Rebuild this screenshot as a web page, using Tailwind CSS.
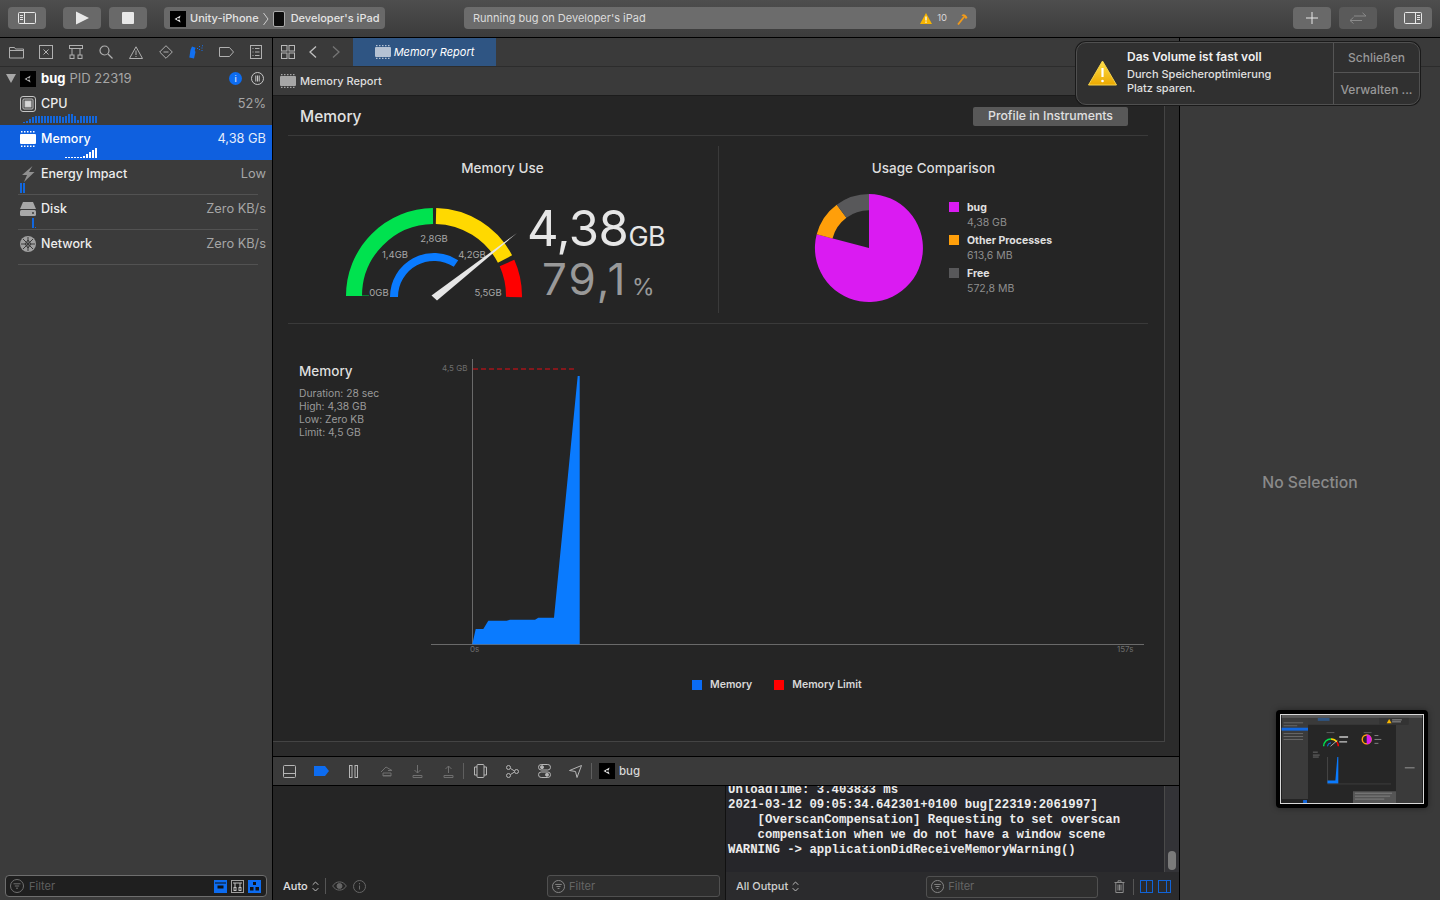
<!DOCTYPE html>
<html lang="en">
<head>
  <meta charset="UTF-8" />
  <title>Xcode - Memory Report</title>
  <script src="https://cdn.jsdelivr.net/npm/@tailwindcss/browser@4"></script>
</head>
<body class="bg-[#3a3a3a] font-[Inter,sans-serif] antialiased">
<div class="relative w-[1440px] h-[900px] overflow-hidden flex flex-col text-[#e6e6e6]">

  <!-- Toolbar -->
  <header class="h-[38px] shrink-0 flex items-center px-2 pb-[1px] border-b border-black bg-gradient-to-b from-[#4e4e4e] to-[#3b3b3b]">
    <button class="w-[38px] h-[22px] rounded-[4px] bg-[#696969] flex items-center justify-center">
      <svg width="18" height="14" viewBox="0 0 18 14" fill="none" stroke="#e8e8e8"><rect x="0.5" y="1.5" width="17" height="11" rx="1"/><path d="M6.5 1.5v11M2 4.5h3M2 6.5h3M2 8.5h3"/></svg>
    </button>
    <button class="ml-[17px] w-[38px] h-[22px] rounded-[4px] bg-[#696969] flex items-center justify-center">
      <svg width="14" height="14" viewBox="0 0 14 14" fill="#e8e8e8"><path d="M1 0.5L14 7L1 13.5Z"/></svg>
    </button>
    <button class="ml-[8px] w-[38px] h-[22px] rounded-[4px] bg-[#696969] flex items-center justify-center">
      <span class="w-3 h-3 rounded-[1px] bg-[#e8e8e8]"></span>
    </button>
    <div class="ml-[17px] w-[221px] h-[22px] rounded-[4px] bg-[#696969] flex items-center pl-[6px] pt-[1px] text-[11px] text-[#e4e4e4] font-medium">
      <svg width="16" height="16" viewBox="0 0 16 16"><rect width="16" height="16" fill="#000"/><path d="M4.500 8L8 6l2.500-1.500-.5 2L9 8l1 1.500.5 2L8 10z" fill="#ddd"/><circle cx="8" cy="8" r="1" fill="#000"/></svg>
      <span class="ml-[4px]">Unity-iPhone</span>
      <svg class="ml-[4px]" width="6" height="14" viewBox="0 0 6 14" fill="none" stroke="#ccc"><path d="M0.500 1l4.500 6-4.500 6"/></svg>
      <svg class="ml-[4px]" width="12" height="16" viewBox="0 0 12 16"><rect x="0.500" y="0.500" width="11" height="15" rx="1.500" fill="#0c0c0c" stroke="#aaa"/></svg>
      <span class="ml-[6px]">Developer's iPad</span>
    </div>
    <div class="ml-[79px] w-[512px] h-[22px] rounded-[4px] bg-[#6c6c6c] flex items-center pl-[9px] pr-[8px] pt-[1px] text-[11px] text-[#dcdcdc]">
      <span>Running bug on Developer's iPad</span>
      <svg class="ml-auto" width="12" height="11" viewBox="0 0 12 11"><path d="M6 0L12 11H0Z" fill="#f7b500"/><path d="M6 3.500v4M6 8.500v1.200" stroke="#fff" stroke-width="1.300"/></svg>
      <span class="ml-[5px] text-[9.500px] text-[#d8d8d8]">10</span>
      <svg class="ml-[10px]" width="11" height="12" viewBox="0 0 11 12" fill="none"><path d="M1 11.500L7 4" stroke="#f09a1a" stroke-width="1.800"/><path d="M4.500 2.500C6 .8 8 .5 10.500 4.500L9 6 6.500 3.500Z" fill="#f09a1a"/></svg>
    </div>
    <button class="ml-[317px] w-[38px] h-[22px] rounded-[4px] bg-[#696969] flex items-center justify-center">
      <svg width="12" height="12" viewBox="0 0 12 12" stroke="#e8e8e8"><path d="M6 0v12M0 6h12"/></svg>
    </button>
    <button class="ml-[8px] w-[38px] h-[22px] rounded-[4px] bg-[#5a5a5a] flex items-center justify-center">
      <svg width="18" height="12" viewBox="0 0 18 12" fill="none" stroke="#8a8a8a"><path d="M5 4h12M13.500 .8L17 4M1 8.500h12M4.500 5.300L1 8.500l3.500 3"/></svg>
    </button>
    <button class="ml-[17px] w-[38px] h-[22px] rounded-[4px] bg-[#696969] flex items-center justify-center">
      <svg width="18" height="14" viewBox="0 0 18 14" fill="none" stroke="#e8e8e8"><rect x="0.500" y="1.500" width="17" height="11" rx="1"/><path d="M11.500 1.500v11M13 4.500h3M13 6.500h3M13 8.500h3"/></svg>
    </button>
  </header>

  <div class="flex flex-1 min-h-0">

    <!-- Debug navigator -->
    <aside class="w-[273px] shrink-0 border-r border-black bg-[#3b3b3b] flex flex-col">
      <div class="h-[29px] shrink-0 border-b border-[#2c2c2c] flex items-center pl-[1px]">
        <span class="w-[30px] flex justify-center"><svg width="15" height="13" viewBox="0 0 15 13" fill="none" stroke="#b0b0b0"><path d="M.5 3V1.500h5l1 1.500h8v9H.5zM.5 4.500h14"/></svg></span>
        <span class="w-[30px] flex justify-center"><svg width="14" height="14" viewBox="0 0 14 14" fill="none" stroke="#b0b0b0"><rect x=".5" y=".5" width="13" height="13"/><path d="M4.500 4.500l5 5M9.500 4.500l-5 5"/></svg></span>
        <span class="w-[30px] flex justify-center"><svg width="14" height="14" viewBox="0 0 14 14" fill="none" stroke="#b0b0b0"><rect x=".5" y=".5" width="13" height="3"/><rect x="1" y="10" width="4" height="3.500"/><rect x="9" y="10" width="4" height="3.500"/><path d="M3 3.500V10M11 3.500V10"/></svg></span>
        <span class="w-[30px] flex justify-center"><svg width="14" height="14" viewBox="0 0 14 14" fill="none" stroke="#b0b0b0" stroke-width="1.200"><circle cx="5.500" cy="5.500" r="4.500"/><path d="M9 9l4.500 4.500"/></svg></span>
        <span class="w-[30px] flex justify-center"><svg width="14" height="13" viewBox="0 0 14 13" fill="none" stroke="#b0b0b0"><path d="M7 .8L13.500 12.500H.5zM7 4.500v4.500M7 10v1"/></svg></span>
        <span class="w-[30px] flex justify-center"><svg width="14" height="14" viewBox="0 0 14 14" fill="none" stroke="#b0b0b0"><path d="M7 .7L13.300 7 7 13.300 .7 7zM4.500 7h5"/></svg></span>
        <span class="w-[30px] flex justify-center"><svg width="15" height="14" viewBox="0 0 15 14" fill="#1270f0"><path d="M1.500 5L3 1.500l3.500 1.200-.7 2.800L6.500 7 5 13.500.3 12.500z"/><path d="M8 3h1v1H8zM10 1h1v1h-1zM10 4h1v1h-1zM12.500 2.500h1v1h-1zM13 .2h1v1h-1zM12.500 5h1v1h-1z"/></svg></span>
        <span class="w-[30px] flex justify-center"><svg width="15" height="10" viewBox="0 0 15 10" fill="none" stroke="#b0b0b0"><path d="M.5.5h10l4 4.500-4 4.500H.5z"/></svg></span>
        <span class="w-[30px] flex justify-center"><svg width="12" height="14" viewBox="0 0 12 14" fill="none" stroke="#b0b0b0"><rect x=".5" y=".5" width="11" height="13"/><path d="M2.500 3.500h1M5 3.500h4.500M2.500 7h1M5 7h4.500M2.500 10.500h1M5 10.500h4.500"/></svg></span>
      </div>

      <div class="h-[23px] shrink-0 flex items-center pl-[6px] pr-[8px]">
        <svg width="10" height="9" viewBox="0 0 10 9" fill="#a8a8a8"><path d="M0 0h10L5 9z"/></svg>
        <svg class="ml-[4px]" width="16" height="16" viewBox="0 0 16 16"><rect width="16" height="16" fill="#000"/><path d="M4.500 8L8 6l2.500-1.500-.5 2L9 8l1 1.500.5 2L8 10z" fill="#aaa"/><circle cx="8" cy="8" r="1" fill="#000"/></svg>
        <span class="ml-[5px] text-[13px] font-bold text-white">bug</span>
        <span class="ml-[4px] text-[13px] text-[#a6a6a6]">PID 22319</span>
        <span class="ml-auto w-[13px] h-[13px] rounded-full bg-[#0d6cf0] flex items-center justify-center text-[8px] font-bold text-[#bcd6ff]">i</span>
        <svg class="ml-[9px]" width="13" height="13" viewBox="0 0 13 13" fill="none" stroke="#c8c8c8"><circle cx="6.500" cy="6.500" r="6"/><path d="M4.800 3.500v6M6.500 3.500v6M8.200 3.500v6"/></svg>
      </div>

      <!-- CPU -->
      <div class="relative h-[35px] shrink-0">
        <div class="flex items-center pl-[20px] pr-[6px] h-[27px] pt-[1px]">
          <svg width="16" height="16" viewBox="0 0 16 16" fill="none" stroke="#c6c6c6"><rect x=".5" y=".5" width="15" height="15" rx="2.500"/><rect x="3" y="3" width="10" height="10" rx="1"/><rect x="5" y="5" width="6" height="6" fill="#d6d6d6"/></svg>
          <span class="ml-[5px] text-[12.500px] font-medium text-[#ededed]">CPU</span>
          <span class="ml-auto text-[12.800px] text-[#a6a6a6]">52%</span>
        </div>
        <svg class="absolute left-0 top-[23px]" width="100" height="11" viewBox="0 0 100 11" fill="none" stroke="#1267de" stroke-width="2"><path d="M24 10V9M27 10V8M30 10V6M33 10V4M36 10V3M39 10V3M42 10V3M45 10V3M48 10V3M51 10V3M54 10V3M57 10V3M60 10V3M63 10V4M66 10V3M69 10V1M72 10V1M75 10V3M78 10V7M81 10V3M84 10V3M87 10V3M90 10V3M93 10V3M96 10V3"/></svg>
      </div>

      <!-- Memory -->
      <div class="relative h-[35px] shrink-0 bg-[#0f60df]">
        <div class="flex items-center pl-[20px] pr-[6px] h-[28px]">
          <svg width="16" height="16" viewBox="0 0 16 16" fill="#fff"><rect x="0" y="3" width="16" height="10" rx="1"/><path d="M1 0h1.500v1.500H1zM4 0h1.500v1.500H4zM7 0h1.500v1.500H7zM10 0h1.500v1.500H10zM13 0h1.500v1.500H13zM1 14.500h1.500V16H1zM4 14.500h1.500V16H4zM7 14.500h1.500V16H7zM10 14.500h1.500V16H10zM13 14.500h1.500V16H13z"/></svg>
          <span class="ml-[5px] text-[12.500px] font-medium text-white">Memory</span>
          <span class="ml-auto text-[12.800px] text-[#e3ecfb]">4,38 GB</span>
        </div>
        <svg class="absolute left-0 top-[22px]" width="100" height="12" viewBox="0 0 100 12" fill="none" stroke="#fff" stroke-width="2"><path d="M66 11v-1M69 11v-1M72 11v-1M75 11v-1M78 11v-1M81 11v-1M84 11V9M87 11V7M90 11V5M93 11V3M96 11V1"/></svg>
      </div>

      <!-- Energy -->
      <div class="relative h-[35px] shrink-0">
        <div class="flex items-center pl-[20px] pr-[6px] h-[28px]">
          <svg width="16" height="16" viewBox="0 0 16 16" fill="#8f8f8f"><path d="M12.500 0L2 9h5l-3 7 10.500-10H9z"/></svg>
          <span class="ml-[5px] text-[12.500px] font-medium text-[#ededed]">Energy Impact</span>
          <span class="ml-auto text-[12.800px] text-[#a6a6a6]">Low</span>
        </div>
        <div class="absolute left-[20px] top-[23px] flex gap-[1px]"><span class="w-[2px] h-[10px] bg-[#1267de]"></span><span class="w-[2px] h-[10px] bg-[#1267de]"></span></div>
        <div class="absolute left-[18px] right-[14px] bottom-0 h-[1px] bg-[#525252]"></div>
      </div>

      <!-- Disk -->
      <div class="relative h-[35px] shrink-0">
        <div class="flex items-center pl-[20px] pr-[6px] h-[28px]">
          <svg width="16" height="14" viewBox="0 0 16 14" fill="#a8a8a8"><path d="M3 0h10l3 7H0z"/><rect y="8" width="16" height="6" rx="1.500"/><circle cx="13" cy="11" r="1" fill="#3b3b3b"/></svg>
          <span class="ml-[5px] text-[12.500px] font-medium text-[#ededed]">Disk</span>
          <span class="ml-auto text-[12.800px] text-[#a6a6a6]">Zero KB/s</span>
        </div>
        <div class="absolute left-[32px] top-[23px] flex items-end gap-[1px]"><span class="w-[2px] h-[10px] bg-[#1267de]"></span><span class="w-[1px] h-[1px] bg-[#1267de]"></span></div>
        <div class="absolute left-[18px] right-[14px] bottom-0 h-[1px] bg-[#525252]"></div>
      </div>

      <!-- Network -->
      <div class="relative h-[35px] shrink-0">
        <div class="flex items-center pl-[20px] pr-[6px] h-[28px]">
          <svg width="16" height="16" viewBox="0 0 16 16"><circle cx="8" cy="8" r="8" fill="#a0a0a0"/><path d="M8 1v14M1 8h14M3 3l10 10M13 3L3 13M8 4l-3 4 3 4 3-4z" stroke="#3b3b3b" fill="none"/></svg>
          <span class="ml-[5px] text-[12.500px] font-medium text-[#ededed]">Network</span>
          <span class="ml-auto text-[12.800px] text-[#a6a6a6]">Zero KB/s</span>
        </div>
        <div class="absolute left-[18px] right-[14px] bottom-0 h-[1px] bg-[#525252]"></div>
      </div>

      <!-- Filter -->
      <div class="mt-auto mb-[3px] mx-[5px] h-[22px] rounded-[4px] border border-[#6e6e6e] bg-[#1f1f1f] flex items-center pl-[4px] pr-[5px]">
        <svg width="14" height="14" viewBox="0 0 14 14" fill="none" stroke="#707070"><circle cx="7" cy="7" r="6.500"/><path d="M3.500 4.800h7M4.800 7h4.400M6 9.200h2"/></svg>
        <span class="ml-[5px] text-[11px] text-[#5f5f5f]">Filter</span>
        <span class="ml-auto w-[13px] h-[13px] bg-[#0d6cf0] flex items-center justify-center"><svg width="11" height="9" viewBox="0 0 11 9" fill="#111"><path d="M0 1h11" stroke="#111"/><rect x="2.500" y="3.500" width="6" height="3"/></svg></span>
        <span class="ml-[4px] w-[13px] h-[13px] border border-[#a0a0a0] flex items-center justify-center"><svg width="9" height="9" viewBox="0 0 9 9" fill="none" stroke="#c0c0c0"><path d="M0 1h9M2 1v4M7 1v4"/><rect x="1" y="5.500" width="2" height="3"/><rect x="6" y="5.500" width="2" height="3"/></svg></span>
        <span class="ml-[4px] w-[13px] h-[13px] bg-[#0d6cf0] flex items-center justify-center"><svg width="9" height="9" viewBox="0 0 9 9" fill="#111"><rect x="3" y="0" width="3" height="3"/><rect x="0" y="5" width="3.500" height="3.500"/><rect x="5.500" y="5" width="3.500" height="3.500"/></svg></span>
      </div>
    </aside>

    <!-- Editor + debug area -->
    <main class="w-[907px] shrink-0 border-r border-black flex flex-col">
      <!-- Tab bar -->
      <div class="h-[29px] shrink-0 border-b border-[#2c2c2c] bg-[#3a3a3a] flex items-stretch">
        <span class="ml-[8px] w-[14px] flex items-center"><svg width="14" height="14" viewBox="0 0 14 14" fill="none" stroke="#b8b8b8"><rect x=".5" y=".5" width="5.500" height="5.500"/><rect x="8" y=".5" width="5.500" height="5.500"/><rect x=".5" y="8" width="5.500" height="5.500"/><rect x="8" y="8" width="5.500" height="5.500"/></svg></span>
        <span class="ml-[14px] w-[8px] flex items-center"><svg width="8" height="12" viewBox="0 0 8 12" fill="none" stroke="#c0c0c0" stroke-width="1.300"><path d="M7 .5L1 6l6 5.500"/></svg></span>
        <span class="ml-[15px] w-[8px] flex items-center"><svg width="8" height="12" viewBox="0 0 8 12" fill="none" stroke="#757575" stroke-width="1.300"><path d="M1 .5L7 6l-6 5.500"/></svg></span>
        <div class="ml-[13px] w-[143px] bg-[#2f5583] flex items-center justify-center">
          <svg width="16" height="14" viewBox="0 0 16 14" fill="#b5c2d3"><rect y="2" width="16" height="10" rx="1"/><path d="M1 0h1.500v1.200H1zM4 0h1.500v1.200H4zM7 0h1.500v1.200H7zM10 0h1.500v1.200H10zM13 0h1.500v1.200H13zM1 12.800h1.500V14H1zM4 12.800h1.500V14H4zM7 12.800h1.500V14H7zM10 12.800h1.500V14H10zM13 12.800h1.500V14H13z"/></svg>
          <span class="ml-[3px] text-[11px] italic text-white">Memory Report</span>
        </div>
      </div>

      <!-- Breadcrumb -->
      <div class="h-[29px] shrink-0 border-b border-[#1c1c1c] bg-[#3a3a3a] flex items-center pl-[7px]">
        <svg width="16" height="14" viewBox="0 0 16 14" fill="#a6a6a6"><rect y="2" width="16" height="10" rx="1"/><path d="M1 0h1.500v1.200H1zM4 0h1.500v1.200H4zM7 0h1.500v1.200H7zM10 0h1.500v1.200H10zM13 0h1.500v1.200H13zM1 12.800h1.500V14H1zM4 12.800h1.500V14H4zM7 12.800h1.500V14H7zM10 12.800h1.500V14H10zM13 12.800h1.500V14H13z"/></svg>
        <span class="ml-[4px] text-[11px] font-medium text-[#dedede]">Memory Report</span>
      </div>

      <div class="h-[646px] shrink-0 flex items-start bg-[#2b2b2b]">
        <!-- Report -->
        <section class="w-[892px] h-[646px] shrink-0 bg-[#252525] border-r border-b border-[#444] pl-[15px] pr-[16px] flex flex-col">
          <div class="h-[40px] shrink-0 border-b border-[#3a3a3a] flex items-center justify-between pl-[12px] pr-[20px] pt-[2px]">
            <h1 class="text-[15.500px] font-medium text-[#e2e2e2]">Memory</h1>
            <button class="w-[155px] h-[19px] rounded-[2px] bg-[#585858] text-[12.300px] font-medium text-[#e0e0e0] flex items-center justify-center">Profile in Instruments</button>
          </div>

          <div class="h-[188px] shrink-0 border-b border-[#3a3a3a] py-[10px] flex">
            <!-- Memory use gauge -->
            <div class="w-[431px] shrink-0 border-r border-[#3a3a3a] flex flex-col items-center pt-[12px] pr-[1px]">
              <h2 class="h-[20px] text-[13.500px] leading-[20px] font-medium text-[#dedede]">Memory Use</h2>
              <svg class="mt-[12px]" width="330" height="120" viewBox="338 190 330 120" fill="none">
                <path d="M354 296 A80 80 0 0 1 433 216" stroke="#00e24f" stroke-width="16"/>
                <path d="M436 216 A80 80 0 0 1 505 259" stroke="#ffd900" stroke-width="16"/>
                <path d="M507 263 A80 80 0 0 1 514 297" stroke="#ff0000" stroke-width="16"/>
                <path d="M362 295.500h7" stroke="#0b7a33"/>
                <path d="M394 297 A40 40 0 0 1 456 263.500" stroke="#0a7bff" stroke-width="8"/>
                <g font-size="9.500" fill="#a8a8a8" text-anchor="middle">
                  <text x="434" y="242">2,8GB</text>
                  <text x="395" y="258">1,4GB</text>
                  <text x="472" y="258">4,2GB</text>
                  <text x="379" y="296">0GB</text>
                  <text x="488" y="296">5,5GB</text>
                </g>
                <path d="M517 233 L431.500 295.500 L437 300.500 Z" fill="#e6e6e6"/>
                <text x="527" y="246" font-size="49" fill="#e6e6e6" letter-spacing="-.5">4,38<tspan font-size="27">GB</tspan></text>
                <text x="542" y="295" font-size="44" fill="#999999" letter-spacing="2">79,1</text>
                <text x="632" y="295" font-size="23" fill="#999999">%</text>
              </svg>
            </div>
            <!-- Usage comparison -->
            <div class="flex-1 flex flex-col pt-[12px]">
              <h2 class="h-[20px] text-center text-[13.500px] leading-[20px] font-medium text-[#dedede]">Usage Comparison</h2>
              <div class="mt-[12px] flex pl-[91px]">
                <svg width="120" height="120" viewBox="810 190 120 120">
                  <path d="M869 248 V194 A54 54 0 1 1 816.700 234.300 Z" fill="#da1bf2"/>
                  <path d="M816.700 234.300 A54 54 0 0 1 836.700 204.700 L846.400 217.800 A37.700 37.700 0 0 0 832.500 238.400 Z" fill="#ff9f0a"/>
                  <path d="M836.700 204.700 A54 54 0 0 1 869 194 V210.300 A37.700 37.700 0 0 0 846.400 217.800 Z" fill="#58585a"/>
                </svg>
                <div class="ml-[19px] mt-[10px] text-[10.500px] leading-[15px]">
                  <div class="h-[33px] relative pl-[18px]"><span class="absolute left-0 top-[2px] w-[10px] h-[10px] bg-[#da1bf2]"></span><p class="font-bold text-[#e0e0e0]">bug</p><p class="text-[#8e8e8e]">4,38 GB</p></div>
                  <div class="h-[33px] relative pl-[18px]"><span class="absolute left-0 top-[2px] w-[10px] h-[10px] bg-[#ff9f0a]"></span><p class="font-bold text-[#e0e0e0]">Other Processes</p><p class="text-[#8e8e8e]">613,6 MB</p></div>
                  <div class="h-[33px] relative pl-[18px]"><span class="absolute left-0 top-[2px] w-[10px] h-[10px] bg-[#58585a]"></span><p class="font-bold text-[#e0e0e0]">Free</p><p class="text-[#8e8e8e]">572,8 MB</p></div>
                </div>
              </div>
            </div>
          </div>

          <!-- Timeline -->
          <div class="flex-1 flex">
            <div class="w-[142px] shrink-0 pl-[11px] pt-[37px]">
              <h3 class="h-[20px] text-[13.500px] leading-[20px] font-medium text-[#dedede]">Memory</h3>
              <div class="mt-[6px] text-[10.300px] leading-[13px] text-[#9a9a9a]">
                <p>Duration: 28 sec</p>
                <p>High: 4,38 GB</p>
                <p>Low: Zero KB</p>
                <p>Limit: 4,5 GB</p>
              </div>
            </div>
            <div class="flex-1 flex flex-col">
              <svg class="mt-[31px]" width="718" height="305" viewBox="430 355 718 305" fill="none">
                <path d="M472.500 359V644" stroke="#6a6a6a"/>
                <path d="M431 644.500H1144" stroke="#6a6a6a"/>
                <path d="M473 369H575" stroke="#a3141a" stroke-dasharray="5 3" stroke-width="1.300"/>
                <path d="M472.300 644.300L475.700 629H483.300L488.300 620.700H506.700L510 619.700H535L538.300 617.700H554L577.700 376H579.700V644.300Z" fill="#0a7bff"/>
                <g font-size="8" fill="#6e6e6e">
                  <text x="442" y="371">4,5 GB</text>
                  <text x="470" y="652">0s</text>
                  <text x="1117" y="652">157s</text>
                </g>
              </svg>
              <div class="mt-[17px] ml-[262px] flex items-center text-[10.500px] font-semibold text-[#d8d8d8]">
                <span class="w-[10px] h-[10px] bg-[#0a6cf5]"></span><span class="ml-[8px]">Memory</span>
                <span class="ml-[22px] w-[10px] h-[10px] bg-[#f00]"></span><span class="ml-[8px]">Memory Limit</span>
              </div>
            </div>
          </div>
        </section>
      </div>

      <div class="h-[15px] shrink-0 bg-[#2b2b2b] border-b border-black"></div>

      <!-- Debug bar -->
      <div class="h-[29px] shrink-0 border-b border-black bg-[#3a3a3a] flex items-center pl-[10px] text-[#d6d6d6]">
        <svg width="13" height="13" viewBox="0 0 13 13" fill="none" stroke="#b6b6b6"><rect x=".5" y=".5" width="12" height="12" rx="1"/><path d="M.5 8.500h12"/></svg>
        <svg class="ml-[18px]" width="15" height="10" viewBox="0 0 15 10" fill="#0d6cf0"><path d="M0 0h11l4 5-4 5H0z"/></svg>
        <svg class="ml-[20px]" width="9" height="13" viewBox="0 0 9 13" fill="none" stroke="#b6b6b6"><rect x=".5" y=".5" width="2.500" height="12"/><rect x="6" y=".5" width="2.500" height="12"/></svg>
        <svg class="ml-[22px]" width="13" height="12" viewBox="0 0 13 12" fill="none" stroke="#6f6f6f"><path d="M1 7l5-5 6 3.500H8M3 10.500h8M3 8h8v3H3z"/></svg>
        <svg class="ml-[19px]" width="11" height="13" viewBox="0 0 11 13" fill="none" stroke="#6f6f6f"><path d="M5.500 0v8M2.500 5l3 3 3-3M1 10.500h9v2H1z"/></svg>
        <svg class="ml-[20px]" width="11" height="13" viewBox="0 0 11 13" fill="none" stroke="#6f6f6f"><path d="M5.500 8V1M2.500 4l3-3 3 3M1 10.500h9v2H1z"/></svg>
        <span class="ml-[9px] w-[1px] h-[16px] bg-[#5f5f5f]"></span>
        <svg class="ml-[10px]" width="13" height="14" viewBox="0 0 13 14" fill="none" stroke="#b6b6b6"><rect x="3" y=".5" width="7" height="13" rx="1"/><path d="M3 3H.5v8H3M10 3h2.500v8H10"/></svg>
        <svg class="ml-[19px]" width="13" height="13" viewBox="0 0 13 13" fill="none" stroke="#b6b6b6"><circle cx="2.500" cy="2.500" r="2"/><circle cx="2.500" cy="10.500" r="2"/><circle cx="10.500" cy="6.500" r="2"/><path d="M4.500 3.500l4 2.500M4.500 9.500l4-2.500"/></svg>
        <svg class="ml-[19px]" width="13" height="14" viewBox="0 0 13 14" fill="none" stroke="#b6b6b6"><rect x=".5" y=".5" width="12" height="5.500" rx="2.700"/><rect x=".5" y="8" width="12" height="5.500" rx="2.700"/><circle cx="4" cy="3.200" r="1.500" fill="#b6b6b6"/><circle cx="9" cy="10.700" r="1.500" fill="#b6b6b6"/></svg>
        <svg class="ml-[18px]" width="13" height="13" viewBox="0 0 13 13" fill="none" stroke="#b6b6b6"><path d="M12.500.5L.5 5.500l6 1 1.500 6z"/></svg>
        <span class="ml-[9px] w-[1px] h-[16px] bg-[#5f5f5f]"></span>
        <svg class="ml-[7px]" width="16" height="16" viewBox="0 0 16 16"><rect width="16" height="16" fill="#000"/><path d="M4.500 8L8 6l2.500-1.500-.5 2L9 8l1 1.500.5 2L8 10z" fill="#ddd"/><circle cx="8" cy="8" r="1" fill="#000"/></svg>
        <span class="ml-[4px] pt-[2px] text-[11.500px] font-medium">bug</span>
      </div>

      <!-- Console -->
      <div class="flex-1 min-h-0 flex">
        <div class="w-[453px] shrink-0 bg-[#252525] border-r border-[#111] flex flex-col justify-end pb-[3px] pl-[10px] pr-[5px]">
          <div class="h-[22px] flex items-center">
            <span class="text-[11px] font-medium text-[#e0e0e0]">Auto</span>
            <svg class="ml-[4px]" width="7" height="11" viewBox="0 0 7 11" fill="none" stroke="#bcbcbc"><path d="M.7 3.800L3.500 1l2.800 2.800M.7 7.200L3.500 10l2.800-2.800"/></svg>
            <span class="ml-[6px] w-[1px] h-[16px] bg-[#555]"></span>
            <svg class="ml-[6px]" width="15" height="10" viewBox="0 0 15 10" fill="none" stroke="#666"><path d="M.7 5C4 -.5 11 -.5 14.300 5 11 10.500 4 10.500 .7 5z"/><circle cx="7.500" cy="5" r="2.500" fill="#666"/></svg>
            <svg class="ml-[6px]" width="13" height="13" viewBox="0 0 13 13" fill="none" stroke="#666"><circle cx="6.500" cy="6.500" r="6"/><path d="M6.500 5.500v4M6.500 3v1.300"/></svg>
            <div class="ml-auto w-[173px] h-[22px] rounded-[3px] border border-[#505050] bg-[#2e2e2e] flex items-center pl-[4px]">
              <svg width="13" height="13" viewBox="0 0 14 14" fill="none" stroke="#8a8a8a"><circle cx="7" cy="7" r="6.500"/><path d="M3.500 4.800h7M4.800 7h4.400M6 9.200h2"/></svg>
              <span class="ml-[4px] text-[11px] text-[#666]">Filter</span>
            </div>
          </div>
        </div>
        <div class="flex-1 min-w-0 flex flex-col bg-[#2b2b2d]">
          <div class="h-[86px] shrink-0 flex">
            <pre class="w-[438px] shrink-0 overflow-hidden pl-[2px] bg-[#26262a] font-['DejaVu_Sans_Mono',monospace] font-bold text-[12.330px] leading-[15px] text-[#ececec]"><code class="block -mt-[3px]">UnloadTime: 3.403833 ms
2021-03-12 09:05:34.642301+0100 bug[22319:2061997]
    [OverscanCompensation] Requesting to set overscan
    compensation when we do not have a window scene
WARNING -&gt; applicationDidReceiveMemoryWarning()</code></pre>
            <div class="flex-1 border-l border-[#4a4a4a] bg-[#333337] relative">
              <span class="absolute left-[3px] top-[65px] w-[8px] h-[19px] rounded-full bg-[#7b7b7b]"></span>
            </div>
          </div>
          <div class="flex-1 flex items-center pl-[10px] pt-[1px]">
            <span class="whitespace-nowrap text-[11px] font-medium text-[#cfcfcf]">All Output</span>
            <svg class="ml-[4px] shrink-0" width="7" height="11" viewBox="0 0 7 11" fill="none" stroke="#bcbcbc"><path d="M.7 3.800L3.500 1l2.800 2.800M.7 7.200L3.500 10l2.800-2.800"/></svg>
            <div class="ml-[127px] w-[172px] shrink-0 h-[22px] rounded-[3px] border border-[#505050] bg-[#2e2e2e] flex items-center pl-[4px]">
              <svg width="13" height="13" viewBox="0 0 14 14" fill="none" stroke="#8a8a8a"><circle cx="7" cy="7" r="6.500"/><path d="M3.500 4.800h7M4.800 7h4.400M6 9.200h2"/></svg>
              <span class="ml-[4px] text-[11px] text-[#666]">Filter</span>
            </div>
            <svg class="ml-[16px] shrink-0" width="11" height="13" viewBox="0 0 11 13" fill="none" stroke="#8c8c8c"><path d="M.5 2.500h10M4 2.500V.8h3v1.700M1.800 2.500v10h7.400v-10M4 4.500v6M5.500 4.500v6M7 4.500v6"/></svg>
            <span class="ml-[8px] w-[1px] h-[16px] bg-[#555]"></span>
            <svg class="ml-[6px] shrink-0" width="13" height="13" viewBox="0 0 13 13" fill="none" stroke="#1164d8"><rect x=".5" y=".5" width="12" height="12"/><path d="M6.500 .5v12"/></svg>
            <svg class="ml-[5px] shrink-0" width="13" height="13" viewBox="0 0 13 13" fill="none" stroke="#1164d8"><rect x=".5" y=".5" width="12" height="12"/><path d="M8.500 .5v12"/></svg>
          </div>
        </div>
      </div>
    </main>

    <!-- Inspector -->
    <aside class="flex-1 bg-[#3a3a3a] flex flex-col">
      <div class="h-[29px] shrink-0 border-b border-[#2c2c2c]"></div>
      <div class="mt-[404px] text-center text-[15.700px] font-medium text-[#8a8a8a]">No Selection</div>
    </aside>
  </div>

  <!-- Storage notification -->
  <div class="absolute left-[1076px] top-[42px] w-[344px] h-[63px] rounded-[10px] border border-[#505050] bg-[#303030] shadow-[0_0_0_1px_#1a1a1a] flex overflow-hidden">
    <svg class="ml-[11px] mt-[17px]" width="29" height="26" viewBox="0 0 29 26"><defs><linearGradient id="warn" x1="0" y1="0" x2="0" y2="1"><stop offset="0" stop-color="#ffe14a"/><stop offset="1" stop-color="#eba800"/></linearGradient></defs><path d="M14.500 1L28.500 25H.5Z" fill="url(#warn)" stroke="#f6d24a" stroke-linejoin="round"/><path d="M14.500 8v9" stroke="#fff" stroke-width="2.200"/><circle cx="14.500" cy="21" r="1.300" fill="#fff"/></svg>
    <div class="ml-[10px] w-[206px] shrink-0 pt-[6px]">
      <p class="text-[12px] leading-[16px] font-semibold text-[#f0f0f0]">Das Volume ist fast voll</p>
      <p class="mt-[2px] text-[11px] leading-[14px] font-medium text-[#e0e0e0]">Durch Speicheroptimierung<br />Platz sparen.</p>
    </div>
    <div class="flex-1 border-l border-[#555] flex flex-col text-[12px] font-medium text-[#989898]">
      <button class="h-[30px] border-b border-[#555] flex items-center justify-center">Schließen</button>
      <button class="flex-1 flex items-center justify-center pt-[3px]">Verwalten ...</button>
    </div>
  </div>

  <!-- Screenshot thumbnail -->
  <div class="absolute left-[1276px] top-[710px] w-[152px] h-[98px] rounded-[4px] bg-black p-[4px] shadow-[0_0_6px_rgba(0,0,0,0.4)]">
    <svg class="border border-[#d8d8d8] blur-[0.4px]" width="144" height="90" viewBox="0 0 144 90" fill="none">
      <rect width="144" height="90" fill="#262626"/>
      <rect width="144" height="3" fill="#5a5a5a"/>
      <rect y="3" width="27" height="87" fill="#3b3b3b"/>
      <rect x="117" y="3" width="27" height="87" fill="#3a3a3a"/>
      <rect x="27" y="3" width="90" height="7" fill="#3a3a3a"/>
      <rect y="13" width="27" height="3" fill="#1267de"/>
      <rect x="37" y="3" width="12" height="3" fill="#2f5583"/>
      <path d="M2 8h20M2 11h14M2 19h20M2 22h20M2 25h20" stroke="#7d7d7d" stroke-width=".7"/>
      <rect x="100" y="3" width="30" height="7" fill="#333"/>
      <path d="M110 4l2.500 4.500h-5z" fill="#f7b500"/>
      <path d="M113 5h10M113 7h9" stroke="#bbb" stroke-width=".7"/>
      <path d="M43 32a7.500 7.500 0 0 1 7.500-7.500" stroke="#00e24f" stroke-width="1.500"/>
      <path d="M50.500 24.500a7.500 7.500 0 0 1 6 3" stroke="#ffd900" stroke-width="1.500"/>
      <path d="M56.500 27.500a7.500 7.500 0 0 1 1.500 4.500" stroke="#f00" stroke-width="1.500"/>
      <path d="M47 32a3.500 3.500 0 0 1 3.500-3.500" stroke="#0a7bff"/>
      <path d="M50 32l7-6" stroke="#ddd" stroke-width=".7"/>
      <path d="M59 22.500h9M59 27.500h8" stroke="#c8c8c8" stroke-width="1.500"/>
      <path d="M46 18h8M84 18h8" stroke="#777" stroke-width=".7"/>
      <circle cx="87" cy="25" r="4.500" stroke="#ff9f0a" stroke-width="1.500"/>
      <path d="M87 20a5 5 0 0 1 0 10z" fill="#da1bf2"/>
      <path d="M95 21h4M95 25h7M95 29h4" stroke="#aaa" stroke-width=".7"/>
      <path d="M32 38h5M32 41h7M32 43h6" stroke="#888" stroke-width=".7"/>
      <path d="M47 70V43" stroke="#666" stroke-width=".5"/>
      <path d="M47 70v-3h8l2-24h1v27z" fill="#0a7bff"/>
      <path d="M47 70.500h65" stroke="#555" stroke-width=".5"/>
      <rect x="73" y="78" width="44" height="12" fill="#555"/>
      <path d="M75 80h38M75 83h36M75 86h30" stroke="#8c8c8c" stroke-width=".8"/>
      <path d="M126 54h10" stroke="#888" stroke-width="1.200"/>
      <rect x="0" y="86" width="27" height="4" fill="#222"/>
      <rect x="22" y="87" width="4" height="3" fill="#1267de"/>
    </svg>
  </div>
</div>
</body>
</html>
